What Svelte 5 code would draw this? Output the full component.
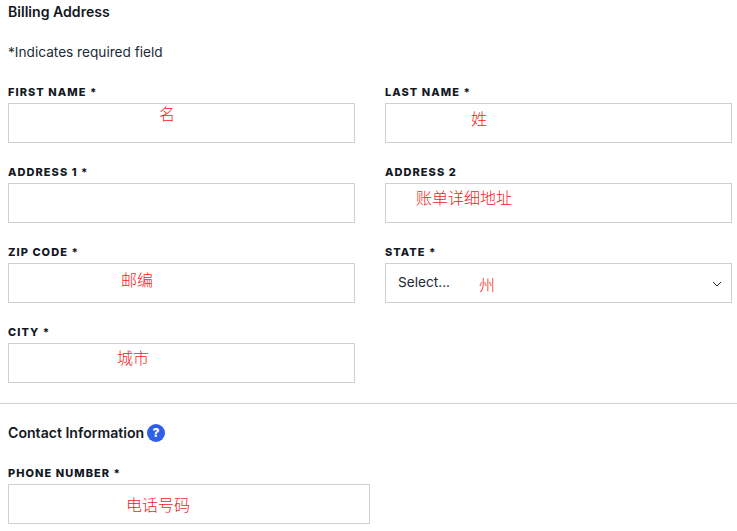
<script>
  const fields = [
    { label: 'FIRST NAME *', note: '名', nx: 150, ny: -1 },
    { label: 'LAST NAME *', note: '姓', nx: 85, ny: 4 },
    { label: 'ADDRESS 1 *' },
    { label: 'ADDRESS 2', note: '账单详细地址', nx: 30, ny: 3 },
    { label: 'ZIP CODE *', note: '邮编', nx: 112, ny: 5 },
    { label: 'STATE *', select: true, note: '州', nx: 93, ny: 10 },
    { label: 'CITY *', note: '城市', nx: 108, ny: 3 }
  ];
</script>

<main class="page">
  <section class="billing">
    <h2>Billing Address</h2>
    <p class="hint">*Indicates required field</p>
    <div class="grid">
      {#each fields as f}
        <div class="field">
          <span class="label">{f.label}</span>
          <div class="box">
            {#if f.select}
              <span class="select-text">Select...</span>
              <svg class="chev" width="10" height="6" viewBox="0 0 10 6" aria-hidden="true">
                <path d="M1 1l4 4 4-4" fill="none" stroke="#222b36" stroke-width="1" />
              </svg>
            {/if}
            {#if f.note}
              <span class="note" style="left:{f.nx}px;top:{f.ny}px">{f.note}</span>
            {/if}
          </div>
        </div>
      {/each}
    </div>
  </section>

  <hr />

  <section class="contact">
    <h2 class="with-icon">
      Contact Information
      <span class="help">?</span>
    </h2>
    <div class="field phone">
      <span class="label">PHONE NUMBER *</span>
      <div class="box">
        <span class="note" style="left:117px;top:9px">电话号码</span>
      </div>
    </div>
  </section>
</main>

<style>
  :global(body) {
    margin: 0;
    background: #fff;
  }
  .page {
    width: 737px;
    height: 531px;
    overflow: hidden;
    font-family: "Inter", "Noto Sans CJK SC", sans-serif;
    color: #14181f;
  }
  .billing {
    padding: 3px 5px 0 8px;
  }
  h2 {
    margin: 0;
    font-size: 14.1px;
    line-height: 17px;
    font-weight: 600;
  }
  .hint {
    margin: 24px 0 0;
    font-size: 13.65px;
    line-height: 17px;
    color: #222b36;
  }
  .grid {
    margin-top: 23px;
    display: grid;
    grid-template-columns: 347px 347px;
    column-gap: 30px;
    row-gap: 21px;
  }
  .field {
    display: flex;
    flex-direction: column;
  }
  .label {
    height: 19px;
    font-size: 11px;
    line-height: 16px;
    font-weight: 800;
    letter-spacing: 1.05px;
    color: #14181f;
  }
  .box {
    position: relative;
    box-sizing: border-box;
    height: 40px;
    border: 1px solid #cfcfcf;
    background: #fff;
    display: flex;
    align-items: center;
  }
  .note {
    position: absolute;
    font-family: "Noto Sans CJK SC", sans-serif;
    font-size: 16px;
    line-height: 20px;
    font-weight: 300;
    color: #f21a1a;
    white-space: nowrap;
  }
  .select-text {
    margin-left: 12px;
    margin-bottom: 2px;
    font-size: 13.65px;
    color: #222b36;
  }
  .chev {
    position: absolute;
    right: 9px;
    top: 17px;
  }
  hr {
    margin: 20px 0 0;
    border: 0;
    border-top: 1px solid #d2d2d2;
  }
  .contact {
    padding: 20px 0 0 8px;
  }
  .with-icon {
    display: flex;
    align-items: center;
    gap: 3px;
    height: 17px;
  }
  .help {
    flex: none;
    width: 18px;
    height: 18px;
    border-radius: 50%;
    background: #2f5fe8;
    color: #fff;
    font-size: 12px;
    font-weight: 800;
    line-height: 18px;
    text-align: center;
  }
  .phone {
    margin-top: 24px;
    width: 362px;
  }
</style>
